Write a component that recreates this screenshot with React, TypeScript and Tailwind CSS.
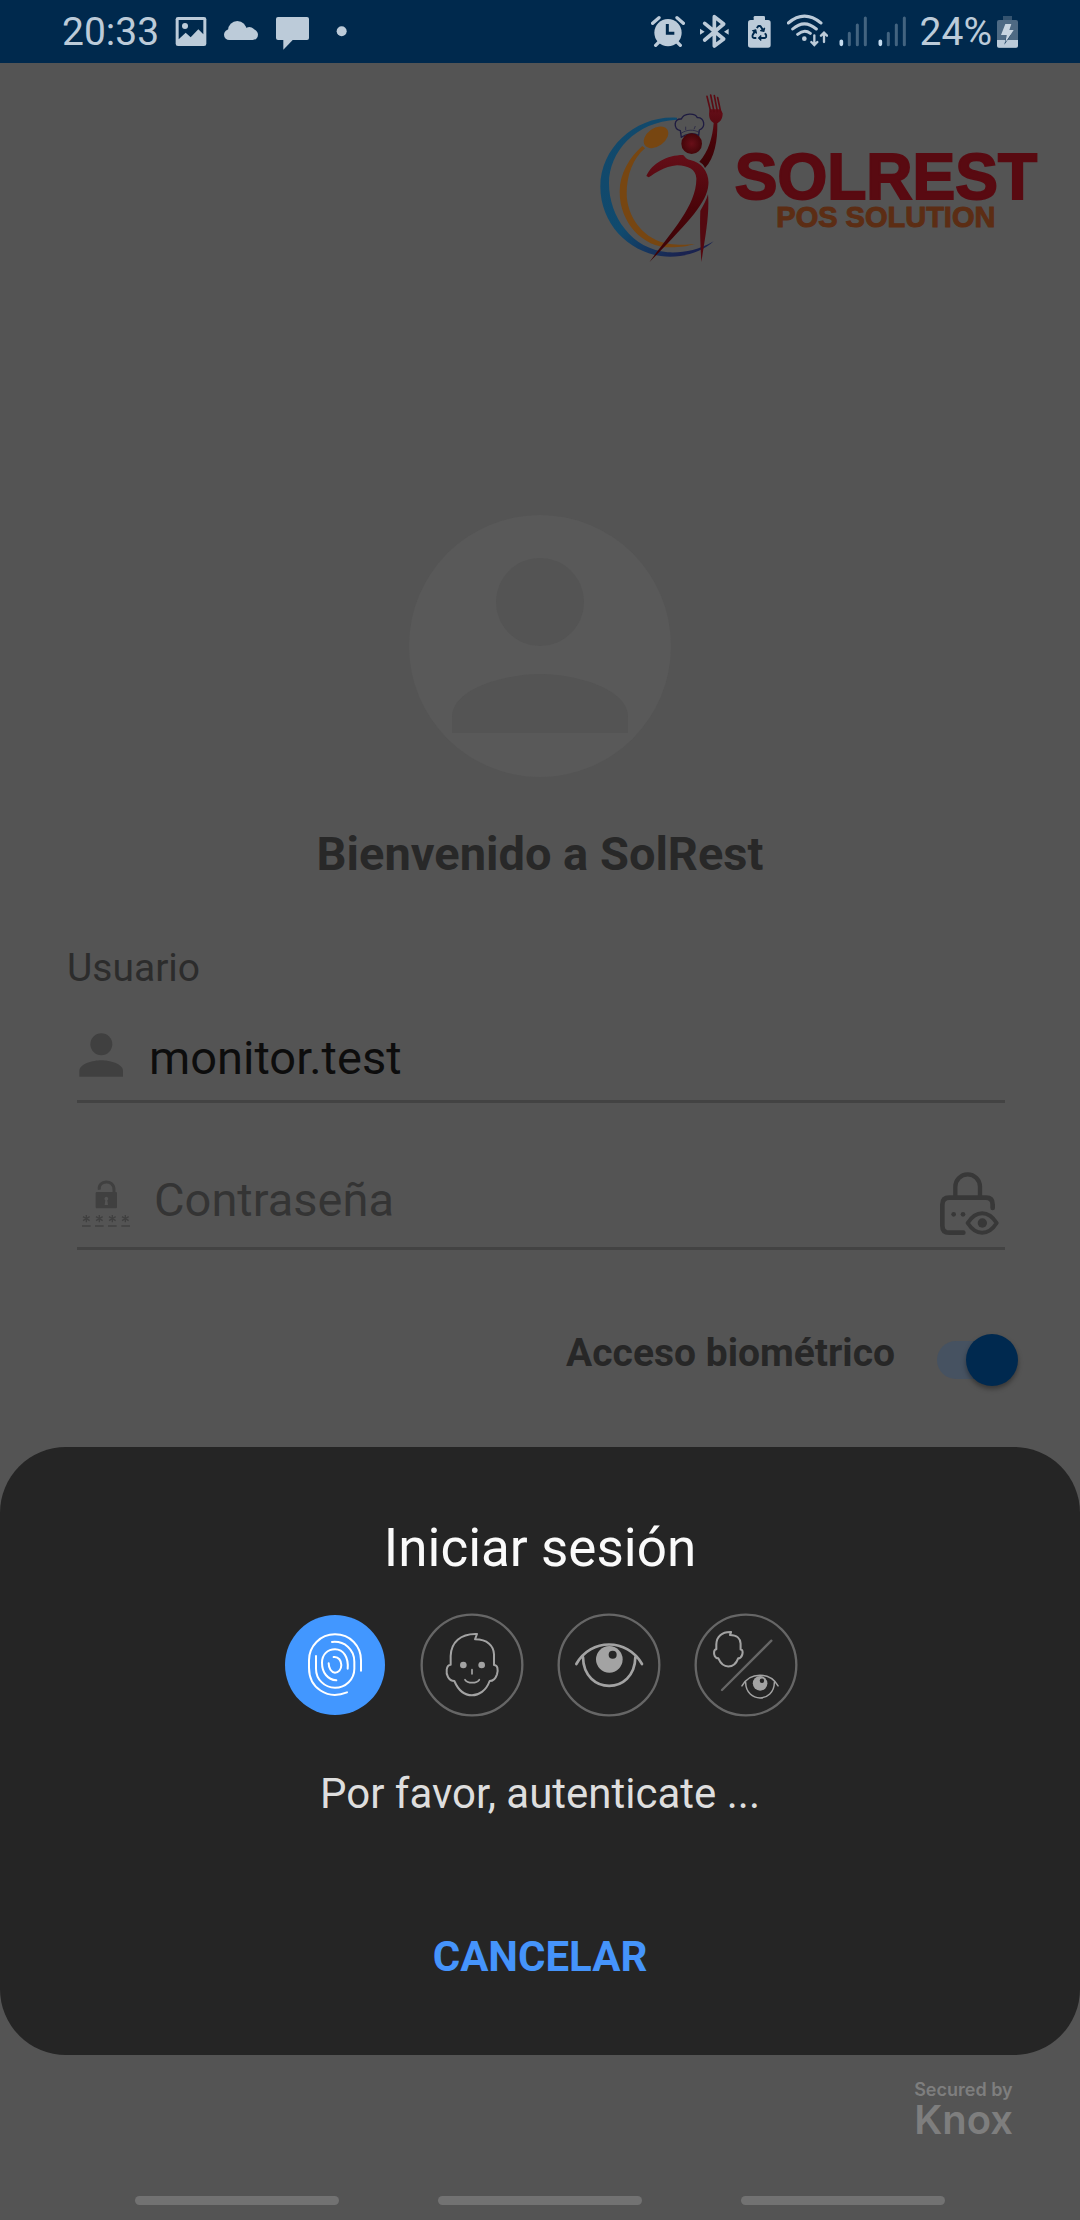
import React, { useState } from "react";
import { FaRecycle } from "react-icons/fa";

const FACE =
  "M620 404 C570 402 542 430 541 470 L541 496 C527 497 526 520 533 533 C538 542 545 545 552 545 C565 575 585 588 605 588 C625 588 647 575 658 545 C666 545 675 540 680 525 C684 510 682 497 671 497 L671 465 C670 440 652 420 614 420 L620 404";

function StatusBar() {
  return (
    <header className="flex h-[63px] items-center justify-between bg-[#00294d] pl-[62px] pr-[61px] text-[39px] leading-[48px] text-[#bccbd9]">
      <div className="flex items-center gap-4">
        <span>20:33</span>
        <svg aria-hidden="true" className="h-[37px] w-8" viewBox="528 39 96 111">
          <rect x="530" y="51" width="92" height="87" rx="7" fill="#bccbd9" />
          <path d="M539 60H613V103L598 88L575 112L560 98L539 118Z" fill="#00294d" />
          <circle cx="558" cy="78" r="9" fill="#bccbd9" />
        </svg>
        <svg aria-hidden="true" className="h-[37px] w-9" viewBox="672 39 108 111" fill="#bccbd9">
          <circle cx="691" cy="104" r="16" />
          <circle cx="715" cy="91" r="28" />
          <circle cx="751" cy="99" r="18" />
          <circle cx="761" cy="104" r="16" />
          <rect x="691" y="96" width="70" height="24" />
        </svg>
        <svg aria-hidden="true" className="h-[37px] w-[34px]" viewBox="824 39 102 111" fill="#bccbd9">
          <rect x="827" y="51" width="99" height="69" rx="6" />
          <path d="M849 117V149L880 117Z" />
        </svg>
        <svg aria-hidden="true" className="h-[37px] w-[22px]" viewBox="976 39 66 111" fill="#bccbd9">
          <circle cx="1026" cy="94" r="15" />
        </svg>
      </div>
      <div className="flex items-center gap-3">
        <svg aria-hidden="true" className="h-[37px] w-[34px]" viewBox="90 39 102 111">
          <circle cx="141" cy="98" r="41" fill="#bccbd9" />
          <path d="M95 70L114 53M168 53L187 70M104 136L114 126M178 136L168 126" stroke="#bccbd9" strokeWidth="10" strokeLinecap="round" fill="none" />
          <path d="M139 72V100H160" stroke="#00294d" strokeWidth="9" fill="none" />
        </svg>
        <svg aria-hidden="true" className="h-[37px] w-9" viewBox="228 39 108 111">
          <path d="M251 70L308 117L280 138V50L308 72L251 120" stroke="#bccbd9" strokeWidth="11" strokeLinejoin="round" strokeLinecap="round" fill="none" />
          <path d="M237 86L251 95L237 104ZM323 86L309 95L323 104Z" fill="#bccbd9" />
        </svg>
        <svg aria-hidden="true" className="h-[37px] w-[30px]" viewBox="372 39 90 111">
          <rect x="381" y="60" width="68" height="83" rx="8" fill="#bccbd9" />
          <rect x="398" y="48" width="34" height="16" rx="4" fill="#bccbd9" />
          <FaRecycle x={391} y={75} size={48} color="#00294d" />
        </svg>
        <svg aria-hidden="true" className="h-[37px] w-[41px]" viewBox="498 39 123 111" fill="none" stroke="#bccbd9" strokeWidth="9" strokeLinecap="round">
          <path d="M502 69Q550 28 600 69M515 87Q550 56 586 87M530 103Q550 86 568 100" />
          <circle cx="550" cy="116" r="7" fill="#bccbd9" stroke="none" />
          <path strokeWidth="7" d="M580 106V134M571 126L580 135L589 126M609 126V99M600 107L609 98L618 107" />
        </svg>
        <svg aria-hidden="true" className="h-[37px] w-[68px] overflow-visible" viewBox="657 39 204 111" strokeWidth="9" strokeLinecap="round">
          <path d="M685 100V134M709 75V134M733 54V134M802 100V134M826 75V134M850 54V134" stroke="#436480" />
          <path d="M661 124V133M778 124V133" stroke="#c5dcf0" strokeWidth="11" />
        </svg>
        <div className="flex items-center gap-1">
          <span>24%</span>
          <svg aria-hidden="true" className="h-[37px] w-[23px]" viewBox="1128 39 69 111">
            <rect x="1149" y="48" width="27" height="14" fill="#34536f" />
            <rect x="1131" y="60" width="63" height="83" rx="6" fill="#4e6a84" />
            <path d="M1131 120H1194V137Q1194 143 1188 143H1137Q1131 143 1131 137Z" fill="#bccbd9" />
            <path d="M1160 106L1153 134L1172 106Z" fill="#00294d" />
            <path d="M1156 72H1174L1168 90H1181L1156 128L1160 105H1143Z" fill="#c8d5e1" />
          </svg>
        </div>
      </div>
    </header>
  );
}

function Logo() {
  return (
    <div className="flex justify-end gap-[11px] pr-[43px] pt-[27px]">
      <svg aria-hidden="true" className="h-[175px] w-[127px]" viewBox="50 30 381 525">
        <defs>
          <linearGradient id="ring" x1="0" y1="0" x2="1" y2="1">
            <stop offset="0" stopColor="#12486a" />
            <stop offset="0.5" stopColor="#104a6e" />
            <stop offset="0.85" stopColor="#1a2350" />
          </linearGradient>
          <linearGradient id="body" x1="0" y1="0" x2="0" y2="1">
            <stop offset="0" stopColor="#640e18" />
            <stop offset="0.5" stopColor="#4a0409" />
            <stop offset="1" stopColor="#3a0306" />
          </linearGradient>
          <radialGradient id="head">
            <stop offset="0" stopColor="#680f18" />
            <stop offset="1" stopColor="#440509" />
          </radialGradient>
        </defs>
        <path fill="url(#ring)" d="M290 113C170 105 60 200 60 320C60 440 160 530 270 530C320 530 370 512 400 484C350 512 310 519 262 517C155 508 86 410 86 310C86 215 165 125 290 119Z" />
        <path fill="#774611" d="M186 198C148 232 118 280 118 335C118 430 190 503 270 502C300 502 325 498 343 492C320 495 290 495 268 492C190 482 139 410 139 340C139 285 158 235 194 205Z" />
        <ellipse cx="227" cy="172" rx="41" ry="27" transform="rotate(-36 227 172)" fill="#774611" />
        <path fill="url(#body)" d="M357 245C385 215 397 170 400 129C386 121 384 105 388 88H420L427 100C427 118 420 125 411 130C412 180 403 235 374 264C371 255 364 249 357 245Z" />
        <path d="M391 94L380 49M401 94L391 45M411 94L402 47M421 96L412 53" stroke="#5c0b13" strokeWidth="5" strokeLinecap="round" />
        <path fill="#545454" stroke="#1e1b41" strokeWidth="4" strokeLinejoin="round" d="M303 172L300 152C278 146 280 115 303 117C310 98 345 98 351 113C372 112 378 142 357 150L355 166C340 158 318 160 303 172Z" />
        <path fill="none" stroke="#1e1b41" strokeWidth="2" d="M302 160C320 148 340 148 356 157M316 150V140M341 148L345 138" />
        <circle cx="334" cy="191" r="31" fill="url(#head)" />
        <path fill="url(#body)" d="M198 288C215 250 260 225 308 225C315 228 312 236 330 240C366 248 388 280 384 315C380 370 320 430 207 547C260 470 350 380 348 295C346 268 325 257 290 256C250 260 225 280 205 292Z" />
        <path fill="#540910" d="M383 343C388 400 375 470 363 546C360 490 358 440 360 392C370 375 378 360 383 343Z" />
      </svg>
      <div className="flex flex-col items-center pt-[60px] font-['Liberation_Sans',Arial,sans-serif] font-bold">
        <span className="text-[64px] leading-[54px] text-[#590a11] [-webkit-text-stroke:2px_#590a11]">SOLREST</span>
        <span className="text-[29px] leading-[26px] text-[#5c2d14] [-webkit-text-stroke:1px_#5c2d14]">POS SOLUTION</span>
      </div>
    </div>
  );
}

function LoginForm() {
  const [user, setUser] = useState("monitor.test");
  const [password, setPassword] = useState("");
  const [biometric, setBiometric] = useState(true);
  return (
    <form className="flex flex-col" onSubmit={(e) => e.preventDefault()}>
      <label htmlFor="user" className="mt-[58px] pl-[67px] text-[39px] leading-[48px] text-[#2c2c2c]">
        Usuario
      </label>
      <div className="ml-[77px] mr-[75px] mt-6 flex h-[87px] items-center border-b-[3px] border-[#434343]">
        <svg aria-hidden="true" className="h-[60px] w-12" viewBox="111 294 144 180" fill="#404040">
          <circle cx="184" cy="343" r="33" />
          <path d="M118 440V423C118 401 160 391 184 391S249 401 249 423V440Z" />
        </svg>
        <input
          id="user"
          value={user}
          onChange={(e) => setUser(e.target.value)}
          className="ml-6 min-w-0 flex-1 bg-transparent text-[47px] leading-[60px] text-[#0d0d0d] outline-none"
        />
      </div>
      <div className="ml-[77px] mr-[75px] mt-[50px] flex h-[97px] items-center border-b-[3px] border-[#434343]">
        <svg aria-hidden="true" className="h-[60px] w-14" viewBox="111 720 168 180">
          <path d="M178 779C173 750 222 746 222 779V790" stroke="#404040" strokeWidth="9" fill="none" />
          <rect x="167" y="786" width="64" height="49" rx="3" fill="#404040" />
          <path d="M199 800A6 6 0 0 1 202 811L204 825H194L196 811A6 6 0 0 1 199 800Z" fill="#545454" />
          <path d="M139 855V877M129 860L149 872M149 860L129 872M178 855V877M168 860L188 872M188 860L168 872M217 855V877M207 860L227 872M227 860L207 872M256 855V877M246 860L266 872M266 860L246 872" stroke="#404040" strokeWidth="4" />
          <path d="M126 888H152M165 888H191M204 888H230M244 888H270" stroke="#404040" strokeWidth="5" />
        </svg>
        <input
          type="password"
          aria-label="Contraseña"
          placeholder="Contraseña"
          value={password}
          onChange={(e) => setPassword(e.target.value)}
          className="ml-[21px] min-w-0 flex-1 bg-transparent text-[47px] leading-[60px] text-[#0d0d0d] outline-none placeholder:text-[#343434]"
        />
        <button type="button" aria-label="Mostrar contraseña" className="mr-1">
          <svg aria-hidden="true" className="h-[74px] w-[63px]" viewBox="1194 69 189 222" fill="none" stroke="#383838" strokeLinecap="round">
            <path strokeWidth="13" d="M1246 168V140A37 37 0 0 1 1320 140V168" />
            <path strokeWidth="14" d="M1270 278H1228Q1207 278 1207 257V194Q1207 173 1228 173H1338Q1358 173 1358 194V204" />
            <path strokeWidth="12" strokeLinejoin="round" d="M1283 249C1308 210 1345 210 1370 249C1345 288 1308 288 1283 249Z" />
            <g fill="#383838" stroke="none">
              <circle cx="1241" cy="223" r="7" />
              <circle cx="1269" cy="223" r="7" />
              <circle cx="1327" cy="249" r="14" />
            </g>
          </svg>
        </button>
      </div>
      <label className="mb-[59px] mr-[62px] mt-[82px] flex h-14 items-start justify-end gap-[42px]">
        <span className="text-[39px] font-bold leading-[42px] text-[#272727]">Acceso biométrico</span>
        <span className="relative flex h-14 items-center">
          <input
            type="checkbox"
            role="switch"
            checked={biometric}
            onChange={(e) => setBiometric(e.target.checked)}
            className="peer absolute inset-0 h-full w-full opacity-0"
          />
          <span className="h-[38px] w-[58px] rounded-full bg-[#465261]" />
          <span className="-ml-[29px] size-[52px] rounded-full bg-[#00294f] shadow-[0_3px_5px_rgba(0,0,0,0.35)]" />
        </span>
      </label>
    </form>
  );
}

function MethodButton({ label, viewBox, children }: { label: string; viewBox: string; children: React.ReactNode }) {
  return (
    <button type="button" aria-label={label} className="rounded-full">
      <svg aria-hidden="true" className="size-[104px]" viewBox={viewBox} fill="none" strokeLinecap="round" strokeLinejoin="round">
        {children}
      </svg>
    </button>
  );
}

function Eye() {
  return (
    <g stroke="#a3a3a3" strokeWidth="8">
      <path d="M107 223C150 145 260 145 304 223M127 203C129 317 282 317 284 203" />
      <circle cx="206" cy="209" r="40" fill="#a3a3a3" stroke="none" />
      <circle cx="216" cy="195" r="12" fill="#252525" stroke="none" />
    </g>
  );
}

function BiometricSheet() {
  return (
    <section role="dialog" aria-labelledby="sheet-title" className="flex flex-col items-center rounded-[66px] bg-[#252525] pb-[70px] pt-[69px]">
      <h2 id="sheet-title" className="text-[53px] leading-[64px] text-[#fafafa]">Iniciar sesión</h2>
      <div className="mt-[33px] flex gap-[33px]">
        <MethodButton label="Huella" viewBox="38 341 312 312">
          <circle cx="194" cy="497" r="150" fill="#4297ff" />
          <path
            stroke="#fff"
            strokeWidth="6"
            d="M230 579C170 603 116 565 116 505V483C116 440 150 405 194 405C240 405 272 440 272 483V514M185 428C222 424 252 450 252 487V508C252 540 226 565 194 565C162 565 137 540 137 508V470M198 543C172 541 155 520 155 490C155 465 172 450 194 450C220 450 235 475 232 508M190 473C205 471 213 485 213 497C213 511 204 520 194 520C183 519 175 507 175 492"
          />
        </MethodButton>
        <MethodButton label="Rostro" viewBox="449 341 312 312">
          <circle cx="605" cy="497" r="151" stroke="#666" strokeWidth="7" />
          <path d={FACE} stroke="#a3a3a3" strokeWidth="6" />
          <circle cx="579" cy="497" r="10" fill="#a3a3a3" />
          <circle cx="634" cy="497" r="10" fill="#a3a3a3" />
          <path d="M605 511V524M584 541C592 553 619 553 627 541" stroke="#a3a3a3" strokeWidth="5" />
        </MethodButton>
        <MethodButton label="Iris" viewBox="49 70 312 312">
          <circle cx="205" cy="226" r="151" stroke="#666" strokeWidth="7" />
          <Eye />
        </MethodButton>
        <MethodButton label="Rostro o iris" viewBox="460 70 312 312">
          <circle cx="616" cy="226" r="151" stroke="#666" strokeWidth="7" />
          <path d="M544 301L692 153" stroke="#666" strokeWidth="7" />
          <path d={FACE} stroke="#a3a3a3" strokeWidth="11" transform="translate(224 -99) scale(0.56)" />
          <g transform="translate(545 166) scale(0.55)">
            <Eye />
          </g>
        </MethodButton>
      </div>
      <p className="mt-[49px] text-[42px] leading-[56px] text-[#dedede]">Por favor, autenticate ...</p>
      <button type="button" className="mt-[107px] text-[42px] font-bold leading-[56px] text-[#4594fb]">
        CANCELAR
      </button>
    </section>
  );
}

export default function App() {
  return (
    <div className="flex min-h-screen flex-col bg-[#545454] font-['Roboto',sans-serif]">
      <StatusBar />
      <main className="flex flex-col">
        <Logo />
        <svg aria-hidden="true" className="mt-[249px] size-[264px] self-center" viewBox="0 0 264 264">
          <circle cx="132" cy="132" r="131" fill="#595959" />
          <circle cx="132" cy="88" r="44" fill="#545454" />
          <path d="M44 219V203C44 174 98 160 132 160S220 174 220 203V219Z" fill="#545454" />
        </svg>
        <h1 className="mt-11 text-center text-[47px] font-bold leading-[64px] text-[#282828]">Bienvenido a SolRest</h1>
        <LoginForm />
        <BiometricSheet />
      </main>
      <footer className="flex flex-1 flex-col justify-between pb-[15px] pt-6 text-[#7e7e7e]">
        <div className="mr-[67px] flex flex-col self-end font-['Inter',sans-serif] font-semibold">
          <span className="text-[18px] leading-[22px]">Secured by</span>
          <span className="text-[40px] leading-[38px]">Knox</span>
        </div>
        <nav aria-label="Gestos" className="flex justify-center gap-[99px]">
          <button type="button" aria-label="Recientes" className="h-[9px] w-[204px] rounded-full bg-[#727272]" />
          <button type="button" aria-label="Inicio" className="h-[9px] w-[204px] rounded-full bg-[#727272]" />
          <button type="button" aria-label="Atrás" className="h-[9px] w-[204px] rounded-full bg-[#727272]" />
        </nav>
      </footer>
    </div>
  );
}
